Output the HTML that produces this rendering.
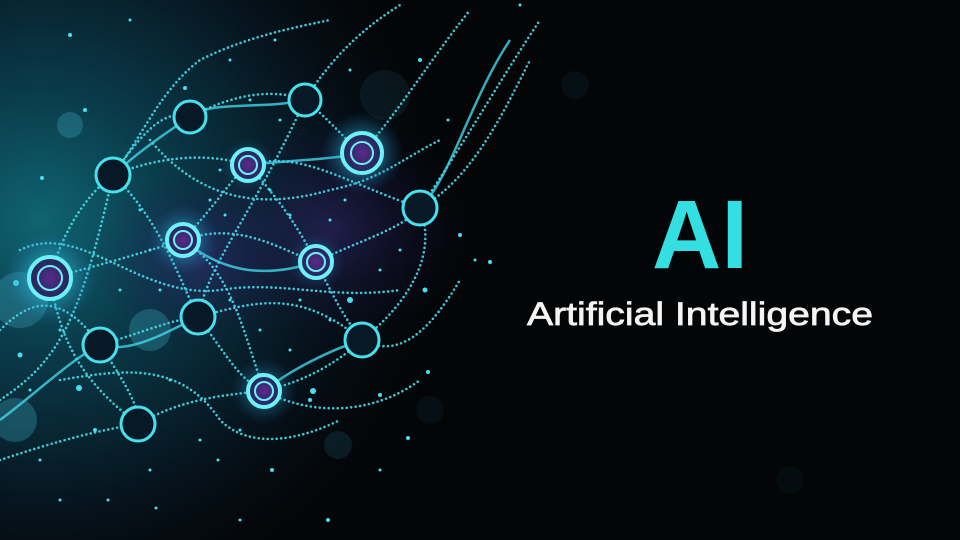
<!DOCTYPE html>
<html><head><meta charset="utf-8"><style>
html,body{margin:0;padding:0;background:#030507;}
body{width:960px;height:540px;overflow:hidden;position:relative;}
svg{position:absolute;left:0;top:0;}
</style></head><body>
<svg width="960" height="540" viewBox="0 0 960 540" xmlns="http://www.w3.org/2000/svg">
<defs>
<radialGradient id="bg1" cx="40" cy="220" r="440" gradientUnits="userSpaceOnUse">
<stop offset="0" stop-color="#0f6470"/><stop offset="0.3" stop-color="#0a3a4a"/><stop offset="0.65" stop-color="#06141e"/><stop offset="1" stop-color="#030507" stop-opacity="0"/></radialGradient>
<radialGradient id="pur" cx="0.5" cy="0.5" r="0.5"><stop offset="0" stop-color="#3a2a7a" stop-opacity="0.5"/><stop offset="1" stop-color="#1a1040" stop-opacity="0"/></radialGradient>
<radialGradient id="glow" cx="0.5" cy="0.5" r="0.5"><stop offset="0" stop-color="#7ff4ff" stop-opacity="0.9"/><stop offset="0.4" stop-color="#35c8e8" stop-opacity="0.45"/><stop offset="1" stop-color="#2060a0" stop-opacity="0"/></radialGradient>
<radialGradient id="core" cx="0.5" cy="0.5" r="0.5"><stop offset="0" stop-color="#5a2a8a"/><stop offset="1" stop-color="#1a2a55"/></radialGradient>
</defs>
<rect width="960" height="540" fill="#030507"/>
<rect width="960" height="540" fill="url(#bg1)"/>
<ellipse cx="330" cy="230" rx="140" ry="110" fill="url(#pur)"/>
<ellipse cx="200" cy="260" rx="110" ry="90" fill="url(#pur)"/>
<g fill="#3aa0b8" opacity="0.35">
<circle cx="70" cy="125" r="13"/><circle cx="150" cy="330" r="21"/><circle cx="20" cy="300" r="28"/><circle cx="15" cy="420" r="22"/><circle cx="385" cy="95" r="25" opacity="0.3"/><circle cx="338" cy="445" r="14" opacity="0.4"/><circle cx="575" cy="85" r="14" opacity="0.2"/><circle cx="790" cy="480" r="14" opacity="0.15"/><circle cx="430" cy="410" r="14" opacity="0.2"/>
</g>
<g fill="none" stroke="#45dcea" stroke-width="2.6" stroke-linecap="round" stroke-dasharray="0 4.5" opacity="0.9">
<path d="M0,400 C60,360 80,320 113,175 C150,120 170,110 190,117"/>
<path d="M0,330 C30,300 60,290 100,345 C130,390 140,410 138,424"/>
<path d="M50,278 C120,260 150,250 183,240 C240,220 280,250 316,262"/>
<path d="M113,175 C160,220 180,280 198,317 C230,360 240,380 264,391"/>
<path d="M190,117 C240,90 280,90 305,100 C330,120 345,140 362,153"/>
<path d="M248,165 C280,200 300,230 316,262 C330,290 345,320 362,340"/>
<path d="M183,240 C220,200 230,180 248,165 C300,150 340,180 420,208"/>
<path d="M100,345 C150,330 170,320 198,317 C260,300 300,290 362,340"/>
<path d="M138,424 C180,400 220,395 264,391 C310,380 340,360 362,340"/>
<path d="M316,262 C360,240 400,230 420,208 C460,150 500,80 540,20"/>
<path d="M362,153 C400,110 430,60 470,10"/>
<path d="M305,100 C330,60 360,30 400,5"/>
<path d="M420,208 C440,260 400,310 362,340"/>
<path d="M50,278 C60,340 80,380 138,424"/>
<path d="M198,317 C210,260 250,220 305,100"/>
<path d="M264,391 C240,320 230,270 183,240"/>
<path d="M0,460 C60,440 100,430 138,424"/>
<path d="M248,165 C200,150 150,160 113,175 C80,200 60,240 50,278"/>
<path d="M362,340 C400,360 430,330 460,280"/>
<path d="M264,391 C320,420 380,410 420,380"/>
<path d="M113,175 C140,140 160,90 200,60 C240,40 280,30 330,20"/>
<path d="M420,208 C470,180 500,120 530,60"/>
<path d="M150,140 C200,200 260,210 330,190 C380,180 400,160 440,140"/>
<path d="M20,250 C80,220 140,300 220,290 C280,280 330,300 400,290"/>
<path d="M60,380 C120,370 180,360 220,420 C250,450 300,440 340,420"/>
</g>
<g fill="none" stroke="#40d8ea" stroke-width="2.5" opacity="0.8">
<path d="M190,117 C210,100 260,110 305,100"/>
<path d="M113,175 C140,150 170,130 190,117"/>
<path d="M183,240 C220,270 260,280 316,262"/>
<path d="M100,345 C130,355 170,330 198,317"/>
<path d="M264,391 C290,370 330,350 362,340"/>
<path d="M248,165 C290,160 330,160 362,153"/>
<path d="M0,420 C40,390 70,360 100,345"/>
<path d="M420,208 C450,180 470,100 510,40"/>
</g>
<g fill="#46e0ee">
<circle cx="70" cy="35" r="2"/><circle cx="130" cy="20" r="1.5"/><circle cx="185" cy="88" r="2"/><circle cx="230" cy="60" r="1.5"/><circle cx="275" cy="40" r="1.5"/><circle cx="420" cy="60" r="2"/><circle cx="448" cy="120" r="1.5"/><circle cx="460" cy="235" r="2"/><circle cx="475" cy="260" r="1.5"/><circle cx="490" cy="262" r="2"/><circle cx="425" cy="290" r="2.5"/><circle cx="428" cy="372" r="2"/><circle cx="380" cy="395" r="2"/><circle cx="310" cy="400" r="2"/><circle cx="272" cy="470" r="2"/><circle cx="328" cy="520" r="2"/><circle cx="218" cy="460" r="1.5"/><circle cx="95" cy="430" r="2"/><circle cx="40" cy="460" r="1.5"/><circle cx="20" cy="355" r="2.5"/><circle cx="16" cy="283" r="3"/><circle cx="42" cy="178" r="2"/><circle cx="85" cy="110" r="2"/><circle cx="220" cy="170" r="1.5"/><circle cx="280" cy="120" r="1.5"/><circle cx="345" cy="200" r="1.5"/><circle cx="300" cy="300" r="1.5"/><circle cx="230" cy="300" r="1.5"/><circle cx="160" cy="290" r="1.5"/><circle cx="350" cy="300" r="3"/><circle cx="313" cy="391" r="3"/><circle cx="79" cy="388" r="3"/><circle cx="156" cy="508" r="1.5"/><circle cx="240" cy="520" r="1.5"/><circle cx="380" cy="470" r="1.5"/><circle cx="520" cy="5" r="1.5"/><circle cx="408" cy="438" r="2"/><circle cx="150" cy="470" r="1.5"/><circle cx="60" cy="500" r="1.5"/><circle cx="108" cy="500" r="1.5"/>
<circle cx="210" cy="200" r="1.5"/><circle cx="225" cy="215" r="1.5"/><circle cx="270" cy="190" r="1.5"/><circle cx="290" cy="215" r="1.5"/><circle cx="330" cy="220" r="1.5"/><circle cx="140" cy="210" r="1.5"/><circle cx="150" cy="250" r="1.5"/><circle cx="120" cy="290" r="1.5"/><circle cx="260" cy="330" r="1.5"/><circle cx="290" cy="350" r="1.5"/><circle cx="330" cy="320" r="1.5"/><circle cx="380" cy="270" r="1.5"/><circle cx="400" cy="250" r="1.5"/><circle cx="240" cy="430" r="1.5"/><circle cx="200" cy="440" r="1.5"/><circle cx="170" cy="380" r="1.5"/><circle cx="60" cy="330" r="1.5"/><circle cx="30" cy="390" r="1.5"/><circle cx="350" cy="70" r="1.5"/><circle cx="250" cy="100" r="1.5"/>
</g>
<circle cx="50" cy="278" r="48" fill="url(#glow)"/>
<circle cx="362" cy="153" r="42" fill="url(#glow)"/>
<circle cx="183" cy="240" r="36" fill="url(#glow)" opacity="0.8"/>
<circle cx="264" cy="391" r="34" fill="url(#glow)" opacity="0.7"/>
<circle cx="316" cy="262" r="30" fill="url(#glow)" opacity="0.5"/>
<circle cx="248" cy="165" r="28" fill="url(#glow)" opacity="0.5"/>
<g stroke="#45e2ee" stroke-width="3" fill="#071826">
<circle cx="190" cy="117" r="16"/><circle cx="305" cy="100" r="16"/><circle cx="113" cy="175" r="17"/><circle cx="420" cy="208" r="17"/><circle cx="198" cy="317" r="17"/><circle cx="100" cy="345" r="17"/><circle cx="362" cy="340" r="17"/><circle cx="138" cy="424" r="17"/>
</g>
<g stroke="#6ef0f8" stroke-width="4" fill="url(#core)">
<circle cx="50" cy="278" r="21"/><circle cx="362" cy="153" r="20"/><circle cx="183" cy="240" r="16"/><circle cx="248" cy="165" r="16"/><circle cx="316" cy="262" r="16"/><circle cx="264" cy="391" r="16"/>
</g>
<g stroke="#6ef0f8" stroke-width="2" fill="none">
<circle cx="50" cy="278" r="12"/><circle cx="362" cy="153" r="11"/><circle cx="183" cy="240" r="9"/><circle cx="248" cy="165" r="9"/><circle cx="316" cy="262" r="9"/><circle cx="264" cy="391" r="9"/>
</g>
<text x="700" y="268" text-anchor="middle" font-family="Liberation Sans, sans-serif" font-weight="bold" font-size="97" fill="#33dfe0" textLength="96" lengthAdjust="spacingAndGlyphs">AI</text>
<text x="700" y="325" text-anchor="middle" font-family="Liberation Sans, sans-serif" font-size="32" fill="#f4f4f4" stroke="#f4f4f4" stroke-width="0.7" textLength="346" lengthAdjust="spacingAndGlyphs">Artificial Intelligence</text>
</svg>
</body></html>
